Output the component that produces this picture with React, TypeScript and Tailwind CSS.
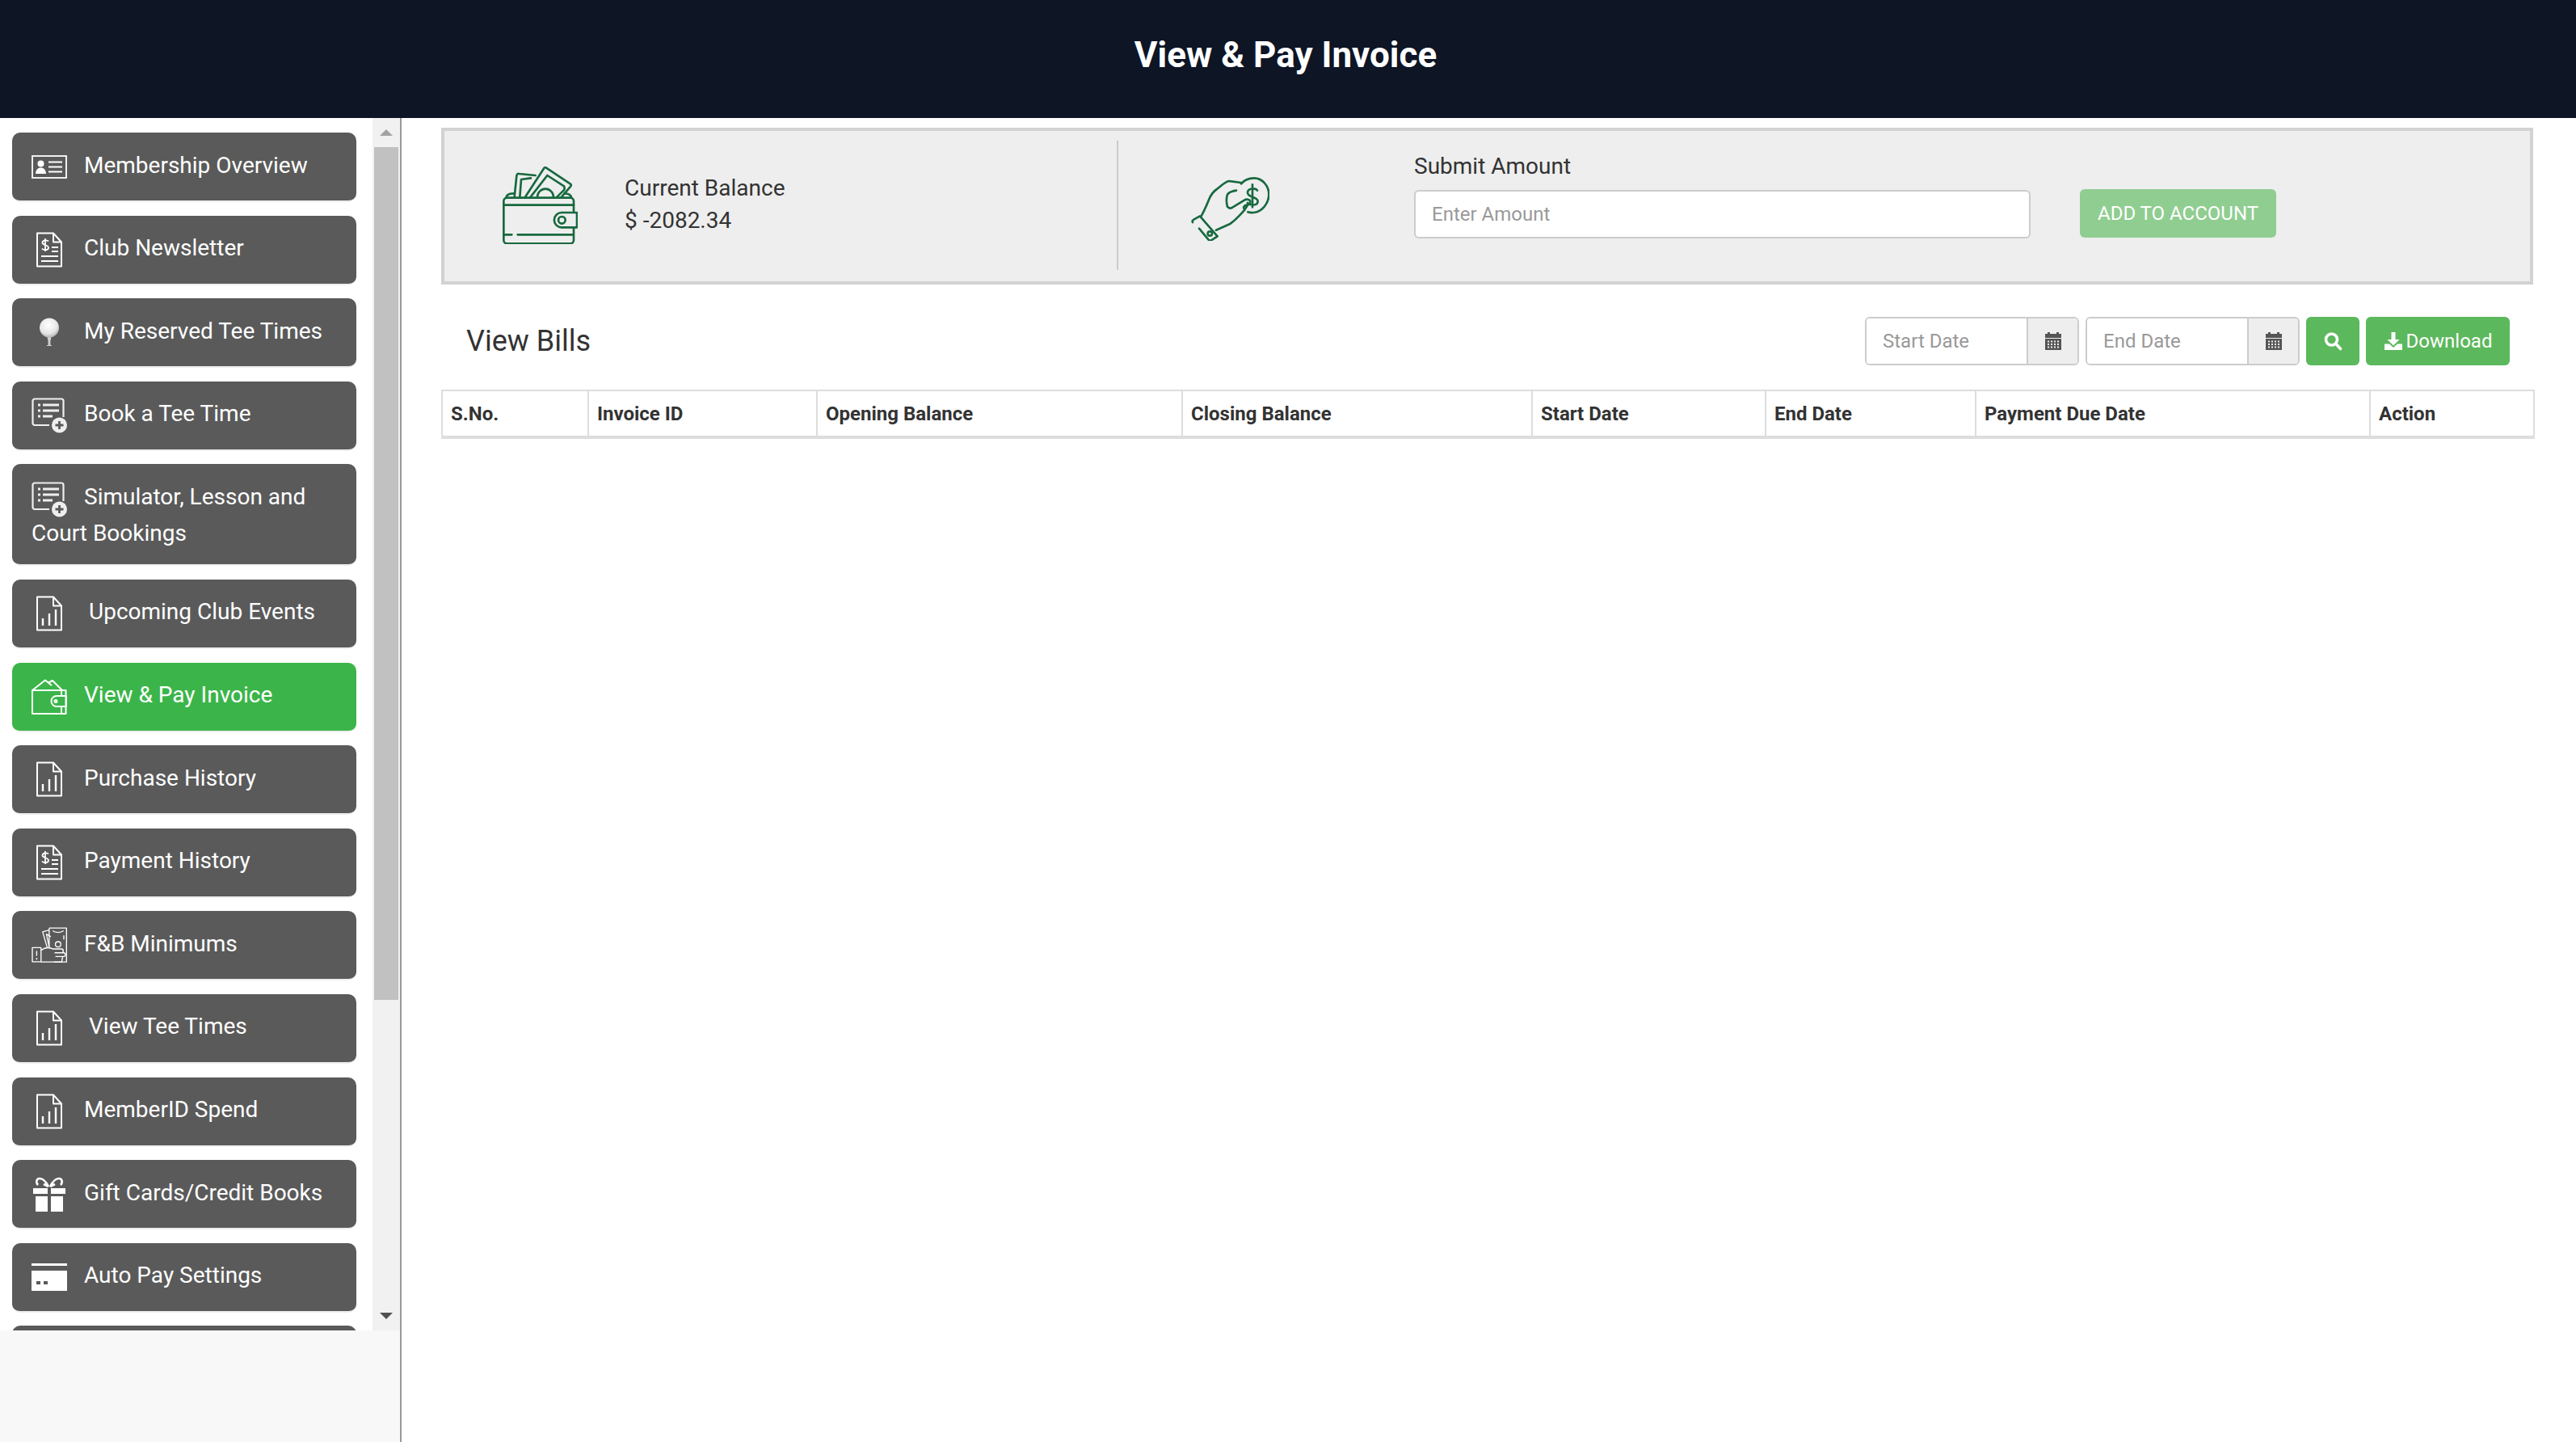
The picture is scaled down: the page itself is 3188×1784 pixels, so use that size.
import React from "react";

const WHITE = "#ffffff";

const IdCardIcon = () => (
  <svg viewBox="0 0 44 29" className="w-[44px] h-[29px]" fill="none" stroke={WHITE}>
    <rect x="1" y="1" width="42" height="27" strokeWidth="1.800" />
    <circle cx="11.500" cy="10.500" r="4" fill={WHITE} stroke="none" />
    <path d="M5 23c.3-5 2.800-7.500 6.500-7.500s6.200 2.500 6.500 7.500z" fill={WHITE} stroke="none" />
    <path d="M21 8.500h17M21 14.500h17M21 20.500h17" strokeWidth="1.800" />
  </svg>
);

const BillIcon = () => (
  <svg viewBox="0 0 34 44" className="w-[34px] h-[44px]" fill="none" stroke={WHITE} strokeWidth="2" strokeLinejoin="round">
    <path d="M2 1.500h20l10 11v30H2z" />
    <path d="M22 1.500v11h10" />
    <path d="M16 11.500c-1-1.500-7-2-7.500 1.500-.4 3.500 7.500 2.500 7.500 6.500 0 3.500-6.500 3-8 1M12 8v16" strokeWidth="1.800" />
    <path d="M20 19h8M20 24h8M7 30h21M7 36h21" strokeWidth="1.800" />
  </svg>
);

const GolfBallIcon = () => (
  <svg viewBox="0 0 26 36" className="w-[26px] h-[36px]">
    <defs>
      <radialGradient id="ball" cx="45%" cy="35%" r="70%">
        <stop offset="0%" stopColor="#ffffff" />
        <stop offset="65%" stopColor="#e6e6e6" />
        <stop offset="100%" stopColor="#a8a8a8" />
      </radialGradient>
    </defs>
    <path d="M10 22h6l-1.600 7v5h1.600v1h-6v-1h1.600v-5z" fill="#d0d0d0" />
    <circle cx="13" cy="12.500" r="12" fill="url(#ball)" />
  </svg>
);

const ListPlusIcon = () => (
  <svg viewBox="0 0 44 44" className="w-[44px] h-[44px]" fill="none">
    <path d="M22 34H4a2.500 2.500 0 0 1-2.500-2.500V4A2.500 2.500 0 0 1 4 1.500h33A2.500 2.500 0 0 1 39.500 4v20" stroke="#eeeeee" strokeWidth="2.200" />
    <path d="M8 9h3M8 16h3M8 23h3" stroke="#eeeeee" strokeWidth="3" />
    <path d="M14 9h20M14 16h20M14 23h12" stroke="#eeeeee" strokeWidth="3" />
    <circle cx="34.500" cy="34" r="9.500" fill="#eeeeee" />
    <path d="M34.500 29v10M29.500 34h10" stroke="#5a5a5a" strokeWidth="2.800" />
  </svg>
);

const ReportIcon = () => (
  <svg viewBox="0 0 34 44" className="w-[34px] h-[44px]" fill="none" stroke={WHITE} strokeWidth="2" strokeLinejoin="round">
    <path d="M2 1.500h20l10 11v30H2z" />
    <path d="M22 1.500v11h10" />
    <path d="M9 37v-9M17 37V22M25 37V17" strokeWidth="2.400" />
  </svg>
);

const WalletNavIcon = () => (
  <svg viewBox="0 0 44 44" className="w-[44px] h-[44px]" fill="none" stroke={WHITE} strokeWidth="2" strokeLinejoin="round">
    <path d="M1 14v29h41.500V14z" />
    <path d="M1 14 17 1.500 25 8M21 4.500l5-2.500 12 12" />
    <path d="M43 21H31a6.500 6.500 0 0 0 0 13h12z" />
    <circle cx="30" cy="27.500" r="1.500" />
    <path d="M37 14v7M37 34v9" />
  </svg>
);

const CashHandIcon = () => (
  <svg viewBox="57 115 131 130" className="w-[44px] h-[44px]" fill="none" stroke={WHITE} strokeWidth="4" strokeLinejoin="round">
    <path d="M122 118H186V243H140" />
    <path d="M122 118V190" />
    <circle cx="155" cy="178" r="10" />
    <path d="M135 128c10 8 30 8 40 0M176 145v15" />
    <path d="M122 125 98 132l17 58M128 150l-16-10 10 48" />
    <rect x="60" y="190" width="32" height="52" />
    <path d="M76 202v18M76 228v6" />
    <path d="M92 200c15-12 30-12 45-5h30a7 7 0 0 1 0 14h-25M167 209h8a7 7 0 0 1 0 14h-30M172 223l-4 20H92" />
  </svg>
);

const GiftIcon = () => (
  <svg viewBox="0 0 42 44" className="w-[42px] h-[44px]" fill={WHITE}>
    <path d="M1 15h18v7H1zM23 15h18v7H23zM4 25h15v19H4zM23 25h15v19H23z" />
    <path d="M20 13C17 7 13 3 9 3 5 3 4 8 7 11M22 13c3-6 7-10 11-10 4 0 5 5 2 8M14 10l6 3M28 10l-6 3" fill="none" stroke={WHITE} strokeWidth="2.600" />
  </svg>
);

const CardIcon = () => (
  <svg viewBox="0 0 44 34" className="w-[44px] h-[34px]" fill={WHITE}>
    <path d="M0 0h44v3H0zM0 9h44v25H0z" />
    <path d="M6 22h5v4H6zM15 22h5v4h-5z" fill="#5a5a5a" />
  </svg>
);

const WalletLarge = () => (
  <svg viewBox="96 72 279 288" className="w-[93px] h-[96px]" fill="none" stroke="#17693f" strokeWidth="8" strokeLinejoin="round" strokeLinecap="round">
    <path d="M100 200a12 12 0 0 1 12-12h236a12 12 0 0 1 12 12v146a12 12 0 0 1-12 12H112a12 12 0 0 1-12-12z" />
    <path d="M100 215h260" />
    <path d="M100 325h30M152 325h206" />
    <path d="M372 243h-57a27.500 27.500 0 0 0 0 55h57z" fill="#eeeeee" />
    <circle cx="316" cy="271" r="13" />
    <path d="M110 188c0-12 8-16 26-16M325 172c16 0 25 4 26 16" />
    <path d="M140 185l8-78c0-6 4-9 9-8l61 6" />
    <path d="M160 185l5-65 36-5" />
    <path d="M180 185 250 78c2-3 5-3 8-1l90 60c3 2 3 5 1 8l-34 40" />
    <path d="M200 185 262 105l62 40c4 8 2 14-4 18l-22 22" />
    <path d="M225 185c0-16 14-30 30-30s30 14 30 30" />
  </svg>
);

const HandCoinLarge = () => (
  <svg viewBox="72 87 291 240" className="w-[97px] h-[80px]" fill="none" stroke="#17693f" strokeWidth="8" strokeLinejoin="round" strokeLinecap="round">
    <path d="M258 115c12-15 30-21 48-21 30 0 55 28 55 60 0 35-27 66-58 68-8 1-14 0-20-2" />
    <path d="M110 235c12-22 20-40 28-60 6-16 14-30 30-40 14-10 28-26 44-30l46 6" />
    <path d="M240 140c-14 2-27 6-33 15-4 12-4 30 0 45 6 8 14 6 20 2l43-26c10-6 22-2 22 6 0 6-6 10-14 12-8 2-12 8-10 12" />
    <path d="M285 190 270 213c-22 24-34 38-55 52l-50 22" />
    <path d="M78 258c-2-4 0-8 4-10l23-13 65 75-23 15c-4 2-7 1-10-2l-35-42" />
    <circle cx="142" cy="300" r="8" />
    <path d="M300 118v84M318 140c-6-10-36-10-36 8 0 20 38 14 38 32 0 18-30 16-38 6" />
  </svg>
);

const CalendarIcon = () => (
  <svg viewBox="0 0 24 24" className="w-[24px] h-[24px]" fill="#555555">
    <path d="M5 1h3v3H5zM16 1h3v3h-3zM2 3h20v5H2z" />
    <path fillRule="evenodd" d="M2 9h20v14H2zM5 11.500v2h2v-2zm4 0v2h2v-2zm4 0v2h2v-2zm4 0v2h2v-2zM5 15v2h2v-2zm4 0v2h2v-2zm4 0v2h2v-2zm4 0v2h2v-2zM5 18.500v2h2v-2zm4 0v2h2v-2zm4 0v2h2v-2zm4 0v2h2v-2z" />
  </svg>
);

const SearchIcon = () => (
  <svg viewBox="0 0 24 24" className="w-[24px] h-[24px]" fill="none" stroke={WHITE} strokeWidth="3.600" strokeLinecap="round">
    <circle cx="10.500" cy="10" r="7" />
    <path d="M16 15.500l5.500 6" />
  </svg>
);

const DownloadIcon = () => (
  <svg viewBox="0 0 24 24" className="w-[24px] h-[24px]" fill={WHITE}>
    <path d="M9.500 1h5v9h5L12 17.500 4.500 10h5z" />
    <path d="M1 15.500h6l5 4.500 5-4.500h6V23H1z" />
  </svg>
);

type Item = {
  label: string;
  icon?: React.ReactNode;
  wrap?: boolean;
  wide?: boolean;
  active?: boolean;
};

const navItems: Item[] = [
  { label: "Membership Overview", icon: <IdCardIcon /> },
  { label: "Club Newsletter", icon: <BillIcon /> },
  { label: "My Reserved Tee Times", icon: <GolfBallIcon /> },
  { label: "Book a Tee Time", icon: <ListPlusIcon /> },
  { label: "Simulator, Lesson and Court Bookings", icon: <ListPlusIcon />, wrap: true },
  { label: "Upcoming Club Events", icon: <ReportIcon />, wide: true },
  { label: "View & Pay Invoice", icon: <WalletNavIcon />, active: true },
  { label: "Purchase History", icon: <ReportIcon /> },
  { label: "Payment History", icon: <BillIcon /> },
  { label: "F&B Minimums", icon: <CashHandIcon /> },
  { label: "View Tee Times", icon: <ReportIcon />, wide: true },
  { label: "MemberID Spend", icon: <ReportIcon /> },
  { label: "Gift Cards/Credit Books", icon: <GiftIcon /> },
  { label: "Auto Pay Settings", icon: <CardIcon /> },
  // next row is cut off by the scroll area, only its top edge shows
  { label: "" },
];

const columns = [
  { label: "S.No.", width: "w-[181px]" },
  { label: "Invoice ID", width: "w-[283px]" },
  { label: "Opening Balance", width: "w-[452px]" },
  { label: "Closing Balance", width: "w-[433px]" },
  { label: "Start Date", width: "w-[289px]" },
  { label: "End Date", width: "w-[260px]" },
  { label: "Payment Due Date", width: "w-[488px]" },
  { label: "Action", width: "w-[203px]" },
];

const NavItem = ({ item }: { item: Item }) => {
  const bg = item.active ? "bg-[#3bb54a]" : "bg-[#5a5a5a]";

  if (item.wrap) {
    return (
      <a className={`${bg} block shrink-0 h-[126px] rounded-[10px] border-b-2 border-[#eeeeee] px-6 pt-[18px] text-[28px] leading-[45px] text-white`}>
        <span className="flex items-center h-[45px]">
          <span className="flex justify-center shrink-0 w-[44px] mr-[21px] mt-[6px]">{item.icon}</span>
          Simulator, Lesson and
        </span>
        <span className="block">Court Bookings</span>
      </a>
    );
  }

  return (
    <a className={`${bg} flex shrink-0 items-center h-[86px] rounded-[10px] border-b-2 border-[#eeeeee] pl-6 text-[28px] text-white`}>
      <span className="flex justify-center shrink-0 w-[44px]">{item.icon}</span>
      <span className={`${item.wide ? "ml-[27px]" : "ml-[21px]"} -mt-[3px]`}>{item.label}</span>
    </a>
  );
};

const Sidebar = () => (
  <aside className="flex flex-col w-[497px] shrink-0 border-r-2 border-[#999999] bg-[#f8f8f8]">
    <div className="flex h-[1500px] bg-white overflow-hidden">
      <nav className="flex flex-col gap-[16.600px] w-[461px] shrink-0 overflow-hidden pl-[15px] pr-[20px] pt-[18px]">
        {navItems.map((item, i) => (
          <NavItem key={i} item={item} />
        ))}
      </nav>
      <div className="flex flex-col items-center w-[34px] bg-[#f1f1f1]">
        <div className="h-[36px] flex items-center">
          <div className="w-0 h-0 border-x-[8px] border-x-transparent border-b-[8px] border-b-[#a3a3a3]" />
        </div>
        <div className="w-[30px] h-[1055px] bg-[#c1c1c1]" />
        <div className="mt-auto h-[36px] flex items-center">
          <div className="w-0 h-0 border-x-[8px] border-x-transparent border-t-[8px] border-t-[#505050]" />
        </div>
      </div>
    </div>
  </aside>
);

const DateField = ({ placeholder }: { placeholder: string }) => (
  <div className="flex w-[265px] h-[60px] rounded-[6px] border-2 border-[#cccccc] overflow-hidden">
    <input
      placeholder={placeholder}
      className="w-[198px] px-5 bg-white text-[24px] outline-none placeholder:text-[#999999] font-['Roboto',sans-serif]"
    />
    <div className="flex flex-1 items-center justify-center border-l-2 border-[#cccccc] bg-[#eeeeee]">
      <CalendarIcon />
    </div>
  </div>
);

const BalancePanel = () => (
  <section className="flex h-[194px] border-4 border-[#d2d2d2] bg-[#eeeeee] text-[#333333]">
    <div className="flex items-center w-[834px] h-[160px] self-center border-r-2 border-[#cccccc] pl-[72px] -mt-[2px]">
      <WalletLarge />
      <div className="ml-[58px] text-[28px] leading-[40px] -mt-[2px]">
        <div>Current Balance</div>
        <div>$ -2082.34</div>
      </div>
    </div>
    <div className="flex items-center pl-[90px] pt-[6px]">
      <HandCoinLarge />
    </div>
    <div className="ml-[179px] pt-[24px]">
      <div className="text-[28px] leading-[40px] mb-[9px]">Submit Amount</div>
      <div className="flex gap-[61px]">
        <input
          placeholder="Enter Amount"
          className="w-[763px] h-[60px] rounded-[6px] border-2 border-[#cccccc] bg-white px-5 text-[24px] outline-none placeholder:text-[#999999] font-['Roboto',sans-serif]"
        />
        <button className="w-[243px] h-[60px] -mt-px rounded-[6px] bg-[#90cd91] text-[24px] text-white uppercase">
          Add to Account
        </button>
      </div>
    </div>
  </section>
);

const BillsToolbar = () => (
  <div className="flex items-center justify-between h-[60px] mt-[40px] pl-[31px] pr-[29px]">
    <h2 className="text-[36px] font-normal text-[#333333]">View Bills</h2>
    <div className="flex gap-[8px]">
      <DateField placeholder="Start Date" />
      <DateField placeholder="End Date" />
      <button className="flex items-center justify-center w-[66px] h-[60px] rounded-[6px] bg-[#5cb85c]">
        <SearchIcon />
      </button>
      <button className="flex items-center justify-center gap-[4px] w-[178px] h-[60px] rounded-[6px] bg-[#5cb85c] text-[24px] text-white">
        <DownloadIcon />
        Download
      </button>
    </div>
  </div>
);

const BillsTable = () => (
  <table className="mt-[30px] w-full table-fixed border-collapse">
    <thead>
      <tr className="h-[58px] border-t-2 border-b-4 border-[#dddddd]">
        {columns.map((col) => (
          <th
            key={col.label}
            className={`${col.width} border-x-2 border-[#dddddd] px-[10px] text-left text-[24px] font-bold text-[#333333]`}
          >
            {col.label}
          </th>
        ))}
      </tr>
    </thead>
  </table>
);

export default function App() {
  return (
    <div className="flex flex-col w-[3188px] h-[1784px] bg-white overflow-hidden font-['Roboto',sans-serif]">
      <header className="flex items-center justify-center shrink-0 h-[146px] pb-[10px] pr-[6px] bg-[#0e1525]">
        <h1 className="text-[44px] font-bold text-white">View &amp; Pay Invoice</h1>
      </header>
      <div className="flex flex-1 min-h-0">
        <Sidebar />
        <main className="flex-1 min-w-0 pl-[49px] pr-[53px] pt-[12px]">
          <BalancePanel />
          <BillsToolbar />
          <BillsTable />
        </main>
      </div>
    </div>
  );
}
